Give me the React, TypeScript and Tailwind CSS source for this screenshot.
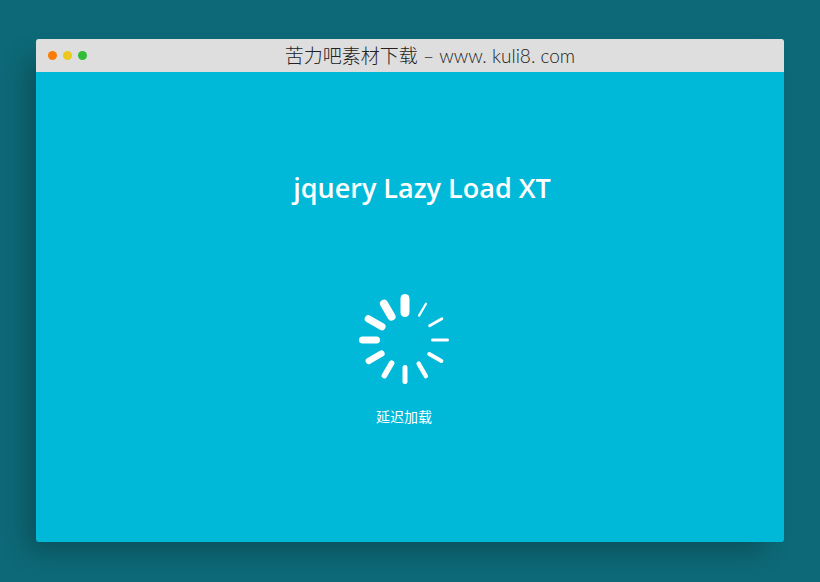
type Spoke = { angle: number; inner: number; outer: number; width: number };

const spokes: Spoke[] = [
  { angle: 0, inner: 23, outer: 46, width: 9 },
  { angle: 30, inner: 27, outer: 43, width: 2.2 },
  { angle: 60, inner: 27, outer: 44, width: 2.8 },
  { angle: 90, inner: 26, outer: 44, width: 3.2 },
  { angle: 120, inner: 26, outer: 44, width: 4 },
  { angle: 150, inner: 25, outer: 44, width: 4.4 },
  { angle: 180, inner: 25, outer: 44, width: 5 },
  { angle: 210, inner: 24, outer: 44, width: 5.6 },
  { angle: 240, inner: 24, outer: 45, width: 6.2 },
  { angle: 270, inner: 25, outer: 46, width: 7 },
  { angle: 300, inner: 23, outer: 46, width: 7.4 },
  { angle: 330, inner: 23, outer: 46, width: 8.2 },
];

function Spinner() {
  return (
    <svg className="h-24 w-24" viewBox="-48 -48 96 96" fill="#fff" aria-hidden="true">
      {spokes.map(({ angle, inner, outer, width }) => (
        <rect
          key={angle}
          x={-width / 2}
          y={-outer}
          width={width}
          height={outer - inner}
          rx={width / 2}
          transform={`rotate(${angle})`}
        />
      ))}
    </svg>
  );
}

function TitleBar() {
  return (
    <header className="grid h-[33px] grid-cols-[1fr_auto_1fr] items-center bg-[#dedede] px-3">
      <div className="flex gap-1.5">
        <span className="size-[9px] rounded-full bg-[#fb7d07]" />
        <span className="size-[9px] rounded-full bg-[#ecc81e]" />
        <span className="size-[9px] rounded-full bg-[#32bd38]" />
      </div>
      <p className="pl-10 font-['Lato','Noto_Sans_CJK_SC',sans-serif] text-[19px] leading-8 font-light whitespace-nowrap text-[#222]">
        苦力吧素材下载 – www. kuli8. com
      </p>
    </header>
  );
}

export default function App() {
  return (
    <div className="flex min-h-screen flex-col bg-[#0d6977] px-9 pt-[39px] pb-10">
      <main className="flex flex-1 flex-col overflow-hidden rounded-[3px] bg-[#00b9d8] shadow-[-14px_14px_24px_-6px_rgba(0,0,0,0.25)]">
        <TitleBar />
        <section className="flex flex-1 flex-col items-center pt-24 text-white">
          <h1 className="pl-6 font-['Open_Sans','Noto_Sans',sans-serif] text-[27px] leading-10 font-semibold">
            jquery Lazy Load XT
          </h1>
          <div className="mt-21 flex flex-col items-center pr-2.5" role="status">
            <Spinner />
            <p className="mt-[18px] pr-0.5 font-['Noto_Sans_CJK_SC',sans-serif] text-sm leading-5">
              延迟加载
            </p>
          </div>
        </section>
      </main>
    </div>
  );
}
